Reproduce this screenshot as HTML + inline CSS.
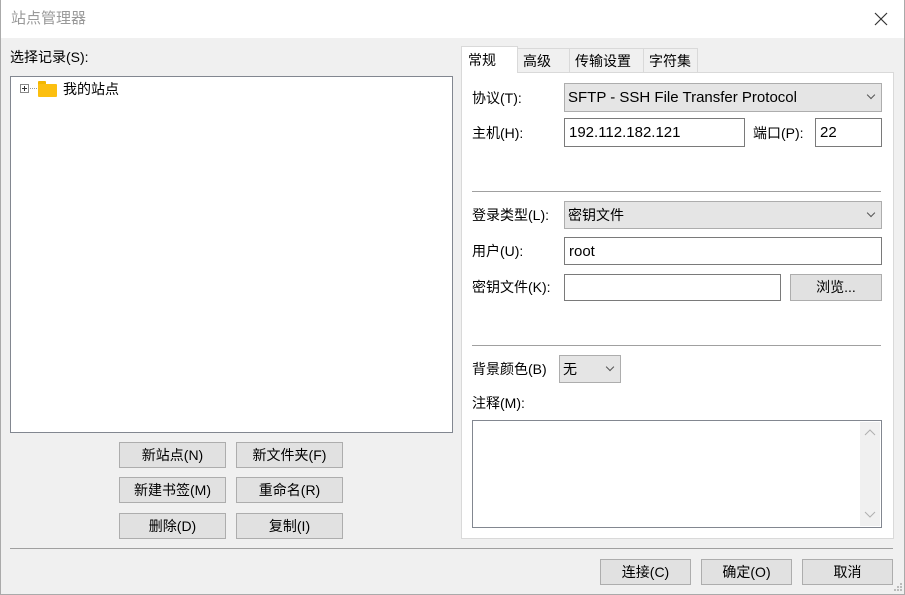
<!DOCTYPE html>
<html><head><meta charset="utf-8"><style>
*{margin:0;padding:0;box-sizing:border-box}
body{width:905px;height:595px;overflow:hidden;background:#f0f0f0;font-family:"Liberation Sans","Microsoft YaHei","Noto Sans CJK SC",sans-serif;font-size:14px;color:#000;position:relative}
.a{position:absolute}
.t{position:absolute;white-space:nowrap;line-height:18px}
.btn{position:absolute;background:#e1e1e1;border:1px solid #adadad;text-align:center;line-height:24px;font-size:14px}
.inp{position:absolute;background:#fff;border:1px solid #7a7a7a;padding-left:4px;font-size:15px;line-height:28px}
.sel{position:absolute;background:#e5e5e5;border:1px solid #adadad;padding-left:3px;font-size:15px;line-height:28px}
.chev{position:absolute;right:7px;top:8px;width:6px;height:6px;border-right:1px solid #555;border-bottom:1px solid #555;transform:rotate(45deg)}
.tab{position:absolute;background:#f0f0f0;border:1px solid #d9d9d9;border-bottom:none;text-align:left;padding-left:5px;line-height:24px}
</style></head><body>
<div class="a" style="left:0;top:0;width:905px;height:38px;background:#fff"></div>
<div class="t" style="left:11px;top:10px;font-size:15px;color:#999">站点管理器</div>
<svg class="a" style="left:874px;top:12px" width="14" height="14"><path d="M1 1L13 13M13 1L1 13" stroke="#333" stroke-width="1.2"/></svg>
<div class="a" style="left:0;top:0;width:1px;height:595px;background:#aaa"></div>
<div class="a" style="left:904px;top:0;width:1px;height:595px;background:#aaa"></div>
<div class="a" style="left:0;top:594px;width:905px;height:1px;background:#aaa"></div>

<div class="t" style="left:10px;top:48px">选择记录(S):</div>
<div class="a" style="left:10px;top:76px;width:443px;height:357px;background:#fff;border:1px solid #828790"></div>
<div class="a" style="left:20px;top:84px;width:9px;height:9px;border:1px solid #888;background:#fff"></div>
<div class="a" style="left:22px;top:88px;width:5px;height:1px;background:#333"></div>
<div class="a" style="left:24px;top:86px;width:1px;height:5px;background:#333"></div>
<div class="a" style="left:30px;top:88px;width:7px;border-top:1px dotted #999"></div>
<div class="a" style="left:38px;top:81px;width:8px;height:4px;background:#f2b600;border-radius:1px 1px 0 0"></div>
<div class="a" style="left:38px;top:84px;width:19px;height:13px;background:#fcbf0f;border-radius:1px"></div>
<div class="t" style="left:63px;top:80px">我的站点</div>

<div class="btn" style="left:119px;top:442px;width:107px;height:26px">新站点(N)</div>
<div class="btn" style="left:236px;top:442px;width:107px;height:26px">新文件夹(F)</div>
<div class="btn" style="left:119px;top:477px;width:107px;height:26px">新建书签(M)</div>
<div class="btn" style="left:236px;top:477px;width:107px;height:26px">重命名(R)</div>
<div class="btn" style="left:119px;top:513px;width:107px;height:26px">删除(D)</div>
<div class="btn" style="left:236px;top:513px;width:107px;height:26px">复制(I)</div>

<div class="a" style="left:461px;top:72px;width:433px;height:467px;background:#fff;border:1px solid #d9d9d9"></div>
<div class="tab" style="left:517px;top:48px;width:53px;height:24px">高级</div>
<div class="tab" style="left:569px;top:48px;width:75px;height:24px">传输设置</div>
<div class="tab" style="left:643px;top:48px;width:55px;height:24px">字符集</div>
<div class="tab" style="left:461px;top:46px;width:57px;height:27px;background:#fff;line-height:26px;padding-left:6px">常规</div>

<div class="t" style="left:472px;top:89px">协议(T):</div>
<div class="sel" style="left:564px;top:83px;width:318px;height:29px">SFTP - SSH File Transfer Protocol<div class="chev"></div></div>
<div class="t" style="left:472px;top:124px">主机(H):</div>
<div class="inp" style="left:564px;top:118px;width:181px;height:29px">192.112.182.121</div>
<div class="t" style="left:753px;top:124px">端口(P):</div>
<div class="inp" style="left:815px;top:118px;width:67px;height:29px">22</div>
<div class="a" style="left:472px;top:191px;width:409px;height:1px;background:#a0a0a0"></div>
<div class="t" style="left:472px;top:206px">登录类型(L):</div>
<div class="sel" style="left:564px;top:201px;width:318px;height:28px;font-size:14px;line-height:27px">密钥文件<div class="chev"></div></div>
<div class="t" style="left:472px;top:242px">用户(U):</div>
<div class="inp" style="left:564px;top:237px;width:318px;height:28px;line-height:27px">root</div>
<div class="t" style="left:472px;top:278px">密钥文件(K):</div>
<div class="inp" style="left:564px;top:274px;width:217px;height:27px"></div>
<div class="btn" style="left:790px;top:274px;width:92px;height:27px">浏览...</div>
<div class="a" style="left:472px;top:345px;width:409px;height:1px;background:#a0a0a0"></div>
<div class="t" style="left:472px;top:360px">背景颜色(B)</div>
<div class="sel" style="left:559px;top:355px;width:62px;height:28px;font-size:14px;line-height:27px">无<div class="chev"></div></div>
<div class="t" style="left:472px;top:394px">注释(M):</div>
<div class="a" style="left:472px;top:420px;width:410px;height:108px;background:#fff;border:1px solid #828790"></div>
<div class="a" style="left:860px;top:422px;width:20px;height:104px;background:#f0f0f0"></div>
<svg class="a" style="left:864px;top:428px" width="12" height="8"><path d="M1 7L6 2L11 7" stroke="#b0b0b0" fill="none"/></svg>
<svg class="a" style="left:864px;top:511px" width="12" height="8"><path d="M1 1L6 6L11 1" stroke="#b0b0b0" fill="none"/></svg>

<div class="a" style="left:10px;top:548px;width:883px;height:1px;background:#a0a0a0"></div>
<div class="btn" style="left:600px;top:559px;width:91px;height:26px">连接(C)</div>
<div class="btn" style="left:701px;top:559px;width:91px;height:26px">确定(O)</div>
<div class="btn" style="left:802px;top:559px;width:91px;height:26px">取消</div>
<svg class="a" style="left:893px;top:582px" width="10" height="10"><g fill="#bbb"><rect x="7" y="1" width="2" height="2"/><rect x="4" y="4" width="2" height="2"/><rect x="7" y="4" width="2" height="2"/><rect x="1" y="7" width="2" height="2"/><rect x="4" y="7" width="2" height="2"/><rect x="7" y="7" width="2" height="2"/></g></svg>
</body></html>
